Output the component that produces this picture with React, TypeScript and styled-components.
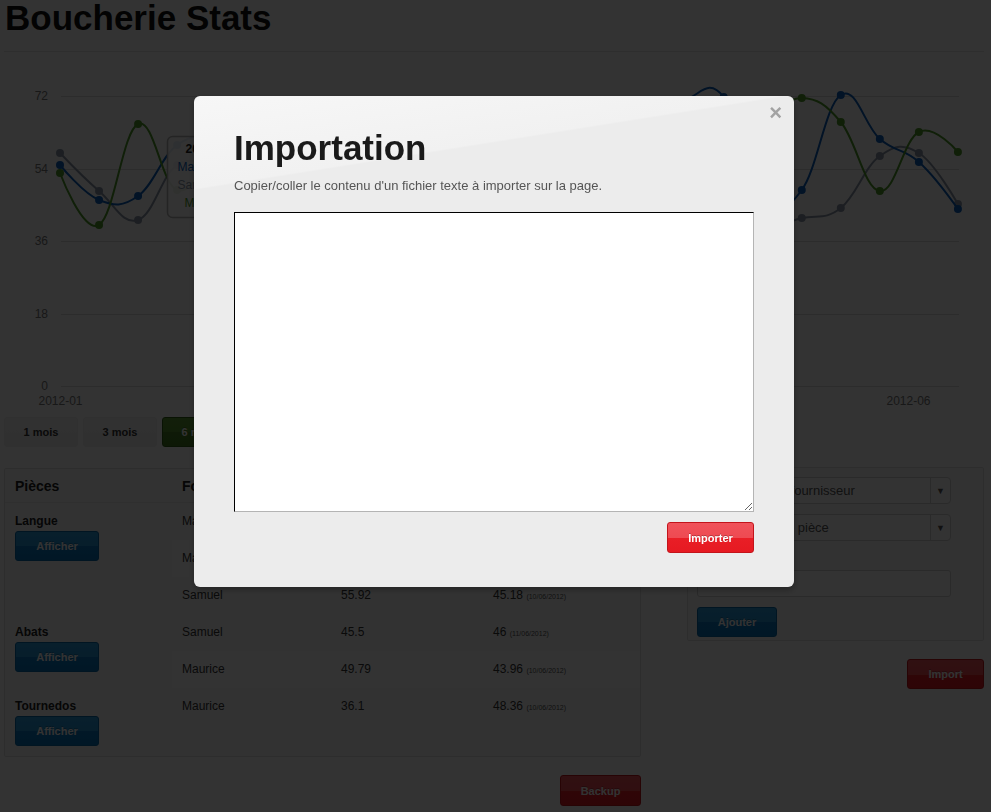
import React, { useMemo } from 'react';
import styled, { createGlobalStyle, css } from 'styled-components';

const GlobalStyle = createGlobalStyle`
  html, body { margin: 0; padding: 0; background: #ffffff; }
  body {
    font-family: "Liberation Sans", Arial, Helvetica, sans-serif;
    font-size: 13px;
    color: #333;
  }
  * { box-sizing: border-box; }
`;

/* ---------- page ---------- */
const Page = styled.div`
  width: 980px;
  margin-left: 4px;
`;

const Title = styled.h1`
  margin: -2px 0 0 1px;
  font-size: 35px;
  line-height: 40px;
  font-weight: bold;
  color: #111;
`;

const Rule = styled.hr`
  margin: 13px 0 0;
  border: 0;
  border-top: 1px solid #e4e4e4;
  height: 0;
`;

const ChartSvg = styled.svg`
  display: block;
  font-family: "Liberation Sans", Arial, sans-serif;
`;

const PeriodBar = styled.div`
  display: flex;
  gap: 5px;
`;

type Tone = 'plain' | 'primary' | 'danger' | 'success';

const tones: Record<Tone, ReturnType<typeof css>> = {
  plain: css`
    background: linear-gradient(to bottom, #f6f6f6 0%, #ededed 100%);
    border: 1px solid #eeeeee;
    color: #333;
  `,
  primary: css`
    background: linear-gradient(to bottom, #2a9bdc 0%, #2394d6 50%, #0a7bc5 50%, #0874bb 100%);
    border: 1px solid #0769a8;
    color: #fff;
    text-shadow: 0 -1px 0 rgba(0, 0, 0, 0.25);
  `,
  danger: css`
    background: linear-gradient(to bottom, #f0525a 0%, #ee4a52 52%, #e91e26 52%, #e61a22 100%);
    border: 1px solid #c3141b;
    color: #fff;
    text-shadow: 0 -1px 0 rgba(0, 0, 0, 0.25);
  `,
  success: css`
    background: linear-gradient(to bottom, #5c9a34 0%, #56932f 50%, #467f24 50%, #427a21 100%);
    border: 1px solid #2f5e15;
    color: #fff;
    text-shadow: 0 -1px 0 rgba(0, 0, 0, 0.25);
  `,
};

const Btn = styled.button<{ $tone: Tone; $w: number; $h?: number }>`
  display: flex;
  align-items: center;
  justify-content: center;
  width: ${(p) => p.$w}px;
  height: ${(p) => p.$h ?? 30}px;
  padding: 0;
  border-radius: 3px;
  font-family: "Liberation Sans", Arial, sans-serif;
  font-size: 11px;
  font-weight: bold;
  cursor: pointer;
  ${(p) => tones[p.$tone]}
`;

const Main = styled.div`
  display: flex;
  align-items: flex-start;
  gap: 46px;
  margin-top: 20px;
`;

const Column = styled.div<{ $w: number; $offset?: number }>`
  width: ${(p) => p.$w}px;
  padding-top: ${(p) => p.$offset ?? 0}px;
  display: flex;
  flex-direction: column;
  align-items: flex-end;
`;

const Panel = styled.div<{ $pad?: string }>`
  width: 100%;
  border: 1px solid #e2e2e2;
  border-radius: 2px;
  background: #fbfbfb;
  padding: ${(p) => p.$pad ?? '0'};
`;

const FootAction = styled.div`
  margin-top: 18px;
`;

/* ---------- table ---------- */
const Table = styled.table`
  width: 100%;
  border-collapse: collapse;
  table-layout: fixed;
`;

const HeadCell = styled.th<{ $w?: number }>`
  ${(p) => (p.$w ? `width: ${p.$w}px;` : '')}
  text-align: left;
  padding: 10px 10px 9px;
  font-size: 14px;
  line-height: 14px;
  font-weight: bold;
  color: #222;
  border-bottom: 1px solid #e8e8e8;
  white-space: nowrap;
  overflow: hidden;
`;

const Cell = styled.td<{ $striped?: boolean }>`
  padding: 10px;
  height: 37px;
  vertical-align: top;
  font-size: 12px;
  line-height: 17px;
  color: #333;
  background: ${(p) => (p.$striped ? '#ffffff' : 'transparent')};
  white-space: nowrap;
`;

const PieceName = styled.div`
  font-size: 12px;
  line-height: 17px;
  font-weight: bold;
  color: #222;
  margin-bottom: 1px;
`;

const DateNote = styled.small`
  font-size: 7px;
  line-height: 7px;
  color: #555;
`;

/* ---------- form ---------- */
const SelectBox = styled.div<{ $gap?: number }>`
  display: flex;
  width: 254px;
  height: 27px;
  border: 1px solid #cfcfcf;
  border-radius: 4px;
  background: #fff;
  margin-bottom: ${(p) => p.$gap ?? 0}px;
`;

const SelectText = styled.span`
  flex: 1;
  padding-left: 8px;
  font-size: 13px;
  line-height: 25px;
  color: #555;
  white-space: nowrap;
  overflow: hidden;
`;

const SelectArrow = styled.span`
  width: 20px;
  border-left: 1px solid #cfcfcf;
  display: flex;
  align-items: center;
  justify-content: center;
  font-size: 9px;
  color: #555;
`;

const FieldLabel = styled.label`
  display: block;
  margin-top: 10px;
  font-size: 12px;
  font-weight: bold;
  line-height: 19px;
  color: #333;
`;

const TextInput = styled.input`
  display: block;
  width: 254px;
  height: 27px;
  border: 1px solid #cfcfcf;
  border-radius: 3px;
  background: #fff;
  margin-bottom: 10px;
`;

/* ---------- modal ---------- */
const Backdrop = styled.div`
  position: fixed;
  inset: 0;
  background: rgba(0, 0, 0, 0.8);
`;

const Modal = styled.div`
  position: fixed;
  top: 96px;
  left: 194px;
  width: 600px;
  padding: 34px 40px 34px;
  border-radius: 6px;
  background: linear-gradient(171deg, #f7f7f7 0%, #f1f1f1 15.8%, #ececec 16.1%, #ececec 100%);
  box-shadow: 0 3px 7px rgba(0, 0, 0, 0.3);
`;

const Close = styled.span`
  position: absolute;
  top: 6px;
  right: 12px;
  font-size: 22px;
  line-height: 22px;
  font-weight: bold;
  color: #a2a2a2;
  cursor: pointer;
`;

const ModalTitle = styled.h2`
  margin: 0;
  font-size: 35px;
  line-height: 36px;
  font-weight: bold;
  color: #1a1a1a;
`;

const ModalText = styled.p`
  margin: 11px 0 0;
  font-size: 13px;
  line-height: 18px;
  color: #555;
`;

const ImportArea = styled.textarea`
  display: block;
  margin-top: 17px;
  width: 520px;
  height: 300px;
  background: #fff;
  border-style: solid;
  border-width: 1px;
  border-color: #000 #b4b4b4 #b4b4b4 #000;
  padding: 4px;
  font-family: "Liberation Sans", Arial, sans-serif;
`;

const ModalFooter = styled.div`
  display: flex;
  justify-content: flex-end;
  margin-top: 10px;
`;

/* ---------- chart ---------- */
const STEP = 39.04;
const X0 = 56;
const yOf = (v: number) => 334 - v * (290 / 72);

type Series = { name: string; color: string; ys: number[] };

const SERIES: Series[] = [
  {
    name: 'Samuel',
    color: '#8c98aa',
    ys: [153, 191, 220, 165, 170, 190, 160, 140, 175, 200, 185, 160, 150, 170, 195, 210, 205, 190, 225, 218, 208, 156, 153, 204],
  },
  {
    name: 'Maurice',
    color: '#0b5fbd',
    ys: [165, 200, 196, 145, 140, 170, 130, 150, 180, 160, 120, 145, 175, 150, 130, 120, 100, 97, 200, 190, 95, 139, 162, 209],
  },
  {
    name: 'Marcel',
    color: '#4f9c2a',
    ys: [173, 225, 124, 190, 150, 120, 165, 200, 140, 130, 175, 190, 150, 120, 140, 170, 130, 110, 118, 98, 122, 191, 132, 152],
  },
];

function splinePath(pts: [number, number][]) {
  const s = 1.5;
  const d = 2.5;
  const L: [number, number][] = [];
  const R: [number, number][] = [];
  pts.forEach(([x, y], i) => {
    if (i === 0 || i === pts.length - 1) {
      L[i] = [x, y];
      R[i] = [x, y];
      return;
    }
    const [lx, ly] = pts[i - 1];
    const [nx, ny] = pts[i + 1];
    const lcx = (s * x + lx) / d;
    const rcx = (s * x + nx) / d;
    let lcy = (s * y + ly) / d;
    let rcy = (s * y + ny) / d;
    const corr = ((rcy - lcy) * (rcx - x)) / (rcx - lcx) + y - rcy;
    lcy += corr;
    rcy += corr;
    L[i] = [lcx, lcy];
    R[i] = [rcx, rcy];
  });
  let p = `M ${pts[0][0]} ${pts[0][1]}`;
  for (let i = 1; i < pts.length; i++) {
    p += ` C ${R[i - 1][0].toFixed(2)} ${R[i - 1][1].toFixed(2)} ${L[i][0].toFixed(2)} ${L[i][1].toFixed(2)} ${pts[i][0].toFixed(2)} ${pts[i][1].toFixed(2)}`;
  }
  return p;
}

function Chart() {
  const lines = useMemo(
    () =>
      SERIES.map((s) => {
        const pts = s.ys.map((y, i) => [X0 + i * STEP, y - 52] as [number, number]);
        return { ...s, pts, d: splinePath(pts) };
      }),
    []
  );
  const ticks = [72, 54, 36, 18, 0];
  const months = ['2012-01', '2012-02', '2012-03', '2012-04', '2012-05', '2012-06'];
  return (
    <ChartSvg width={980} height={365} viewBox="0 0 980 365">
      {ticks.map((t) => (
        <g key={t}>
          <line x1={57} x2={955} y1={Math.round(yOf(t)) + 0.5} y2={Math.round(yOf(t)) + 0.5} stroke="#dcdcdc" strokeWidth={1} />
          <text x={44} y={yOf(t) + 4} textAnchor="end" fontSize={12} fill="#777">
            {t}
          </text>
        </g>
      ))}
      {months.map((m, i) => (
        <text key={m} x={56.5 + i * 169.6} y={353} textAnchor="middle" fontSize={12} fill="#777">
          {m}
        </text>
      ))}
      {lines.map((s) => (
        <g key={s.name}>
          <path d={s.d} fill="none" stroke={s.color} strokeWidth={2} />
          {s.pts.map(([x, y], i) => (
            <circle key={i} cx={x} cy={y} r={4} fill={s.color} />
          ))}
        </g>
      ))}
      <g transform="translate(163.5 84.5)">
        <rect width={118} height={81} rx={5} fill="rgba(255,255,255,0.9)" stroke="#b5b5b5" strokeWidth={1.5} />
        <text x={18} y={16} fontSize={12} fontWeight="bold" fill="#222">
          2012-02-19
        </text>
        <text x={10} y={34} fontSize={12} fill="#0b5fbd">
          Maurice: 55.1
        </text>
        <text x={10} y={52} fontSize={12} fill="#8c98aa">
          Samuel: 57.3
        </text>
        <text x={17} y={70} fontSize={12} fill="#4f9c2a">
          Marcel: 47.6
        </text>
      </g>
    </ChartSvg>
  );
}

/* ---------- data ---------- */
type Row = { supplier: string; avg: string; last: string; date: string };
type Piece = { name: string; rows: Row[] };

const PIECES: Piece[] = [
  {
    name: 'Langue',
    rows: [
      { supplier: 'Marcel', avg: '52.3', last: '47.12', date: '(10/06/2012)' },
      { supplier: 'Maurice', avg: '50.12', last: '44.5', date: '(11/06/2012)' },
      { supplier: 'Samuel', avg: '55.92', last: '45.18', date: '(10/06/2012)' },
    ],
  },
  {
    name: 'Abats',
    rows: [
      { supplier: 'Samuel', avg: '45.5', last: '46', date: '(11/06/2012)' },
      { supplier: 'Maurice', avg: '49.79', last: '43.96', date: '(10/06/2012)' },
    ],
  },
  {
    name: 'Tournedos',
    rows: [{ supplier: 'Maurice', avg: '36.1', last: '48.36', date: '(10/06/2012)' }],
  },
];

export default function App() {
  return (
    <>
      <GlobalStyle />
      <Page>
        <Title>Boucherie Stats</Title>
        <Rule />
        <Chart />
        <PeriodBar>
          <Btn $tone="plain" $w={74}>1 mois</Btn>
          <Btn $tone="plain" $w={74}>3 mois</Btn>
          <Btn $tone="success" $w={74}>6 mois</Btn>
          <Btn $tone="plain" $w={74}>1 an</Btn>
          <Btn $tone="plain" $w={74}>Tout</Btn>
        </PeriodBar>
        <Main>
          <Column $w={637} $offset={1}>
            <Panel>
              <Table>
                <thead>
                  <tr>
                    <HeadCell $w={167}>Pièces</HeadCell>
                    <HeadCell $w={159}>Fournisseur</HeadCell>
                    <HeadCell $w={152}>Prix moyen</HeadCell>
                    <HeadCell>Dernier prix</HeadCell>
                  </tr>
                </thead>
                <tbody>
                  {PIECES.map((piece) =>
                    piece.rows.map((row, i) => (
                      <tr key={piece.name + i}>
                        {i === 0 && (
                          <Cell rowSpan={piece.rows.length}>
                            <PieceName>{piece.name}</PieceName>
                            <Btn $tone="primary" $w={84}>Afficher</Btn>
                          </Cell>
                        )}
                        <Cell $striped={i === 1}>{row.supplier}</Cell>
                        <Cell $striped={i === 1}>{row.avg}</Cell>
                        <Cell $striped={i === 1}>
                          {row.last} <DateNote>{row.date}</DateNote>
                        </Cell>
                      </tr>
                    ))
                  )}
                </tbody>
              </Table>
            </Panel>
            <FootAction>
              <Btn $tone="danger" $w={81} $h={31}>Backup</Btn>
            </FootAction>
          </Column>
          <Column $w={297}>
            <Panel $pad="9px 31px 3px 9px">
              <SelectBox $gap={10}>
                <SelectText>Choisissez un fournisseur</SelectText>
                <SelectArrow>▼</SelectArrow>
              </SelectBox>
              <SelectBox>
                <SelectText>Choisissez une pièce</SelectText>
                <SelectArrow>▼</SelectArrow>
              </SelectBox>
              <FieldLabel>Prix</FieldLabel>
              <TextInput type="text" />
              <Btn $tone="primary" $w={80}>Ajouter</Btn>
            </Panel>
            <FootAction>
              <Btn $tone="danger" $w={77}>Import</Btn>
            </FootAction>
          </Column>
        </Main>
      </Page>
      <Backdrop />
      <Modal>
        <Close>×</Close>
        <ModalTitle>Importation</ModalTitle>
        <ModalText>Copier/coller le contenu d'un fichier texte à importer sur la page.</ModalText>
        <ImportArea />
        <ModalFooter>
          <Btn $tone="danger" $w={87} $h={31}>Importer</Btn>
        </ModalFooter>
      </Modal>
    </>
  );
}
